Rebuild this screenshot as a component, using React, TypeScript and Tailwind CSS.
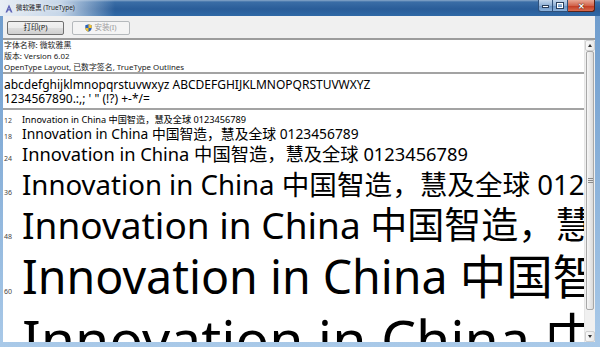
import React from "react";

const rows = [
  { label: "12", cls: "text-[9.2px] leading-[11px]" },
  { label: "18", cls: "text-[13.8px] leading-[17px]" },
  { label: "24", cls: "text-[18.3px] leading-[24px]" },
  { label: "36", cls: "text-[27.6px] leading-[36px]" },
  { label: "48", cls: "text-[37px] leading-[45px]" },
  { label: "60", cls: "text-[46.5px] leading-[58px]" },
  { label: "72", cls: "text-[55.5px] leading-[67px]" },
];

const sample = "Innovation in China 中国智造，慧及全球 0123456789";

function FontIcon() {
  return (
    <svg width="8" height="9" viewBox="0 0 8 9">
      <path d="M4 0.5 L7.5 8.5 H5.8 L5 6.5 H3 L2.2 8.5 H0.5 Z M3.4 5.2 H4.6 L4 3.4 Z" fill="#5a5fb4" />
    </svg>
  );
}

function Shield() {
  return (
    <svg width="7" height="8" viewBox="0 0 7 8">
      <path d="M3.5 0.3 L6.7 1.3 V4 C6.7 6 5 7.3 3.5 7.8 C2 7.3 0.3 6 0.3 4 V1.3 Z" fill="#2d62b8" />
      <path d="M3.5 0.3 L6.7 1.3 V4 H3.5 Z" fill="#f2c230" />
      <path d="M0.3 4 H3.5 V7.8 C2 7.3 0.3 6 0.3 4 Z" fill="#f2c230" />
    </svg>
  );
}

function TitleBar() {
  return (
    <div className="relative h-[16px] shrink-0 bg-[linear-gradient(to_right,rgba(232,238,245,1)_0px,rgba(206,220,236,0.95)_60px,rgba(60,110,170,0)_115px),linear-gradient(to_bottom,#8aa9cb_0px,#3a6da6_2px,#2a5d99_9px,#3069a6_16px)] flex items-center pl-[5px] gap-[3px]">
      <FontIcon />
      <span className="text-[6.4px] leading-none text-[#1b1b1b] [text-shadow:0_0_4px_#fff]">微软雅黑 (TrueType)</span>
      <div className="absolute right-[5px] top-0 flex">
        <div className="w-[15px] h-[12px] rounded-bl-[3px] border border-t-0 border-[#30517a] bg-[linear-gradient(to_bottom,#c5d7ec,#8fb0d6_50%,#6a92c2_51%,#8cb2dc)] flex items-end justify-center pb-[3px]">
          <div className="w-[5px] h-[1px] bg-white border border-[#2a3f5c] box-content" />
        </div>
        <div className="w-[15px] h-[12px] border-b border-r border-[#30517a] bg-[linear-gradient(to_bottom,#c5d7ec,#8fb0d6_50%,#6a92c2_51%,#8cb2dc)] flex items-center justify-center">
          <div className="w-[4px] h-[3px] border-[1.5px] border-white outline outline-1 outline-[#2a3f5c] box-content" />
        </div>
        <div className="w-[27px] h-[12px] rounded-br-[3px] border border-t-0 border-l-0 border-[#5a2218] bg-[linear-gradient(to_bottom,#e9a895,#d2654d_50%,#c0381f_51%,#d86b4f)] flex items-center justify-center">
          <span className="text-[8px] leading-none font-bold text-white [text-shadow:0_0_1px_#3a1208,0_0_1px_#3a1208]">✕</span>
        </div>
      </div>
    </div>
  );
}

function Toolbar() {
  return (
    <div className="h-[24px] shrink-0 bg-[#f0f0f0] border-b-2 border-[#9c9c9c] flex items-start pt-[5px] pl-[4px] gap-[8px]">
      <button className="w-[57px] h-[14px] rounded-[2px] border border-[#707070] bg-[linear-gradient(to_bottom,#f2f2f2,#ebebeb_50%,#dddddd_51%,#cfcfcf)] text-[7.5px] leading-none text-[#111] flex items-center justify-center">
        打印(P)
      </button>
      <button className="w-[58px] h-[14px] rounded-[2px] border border-[#b5b9bc] bg-[#f4f4f4] text-[7.5px] leading-none text-[#9a9a9a] flex items-center justify-center gap-[2px]">
        <Shield />
        安装(I)
      </button>
    </div>
  );
}

function Scrollbar() {
  return (
    <div className="w-[11px] shrink-0 flex flex-col bg-[#f0f0f0] border-l border-[#e6e6e6]">
      <div className="h-[11px] shrink-0 flex items-center justify-center bg-[linear-gradient(to_right,#f9f9f9,#e8e8e8)] border border-[#d0d0d0] rounded-[2px]">
        <div className="w-0 h-0 border-x-[2.5px] border-x-transparent border-b-[3px] border-b-[#333]" />
      </div>
      <div className="h-[259px] shrink-0 mx-px rounded-[2px] border border-[#a8a8a8] bg-[linear-gradient(to_right,#f7f7f7,#e6e6e6_60%,#dadada)] flex flex-col items-center justify-center gap-px">
        <div className="w-[5px] h-px bg-[#8a8a8a]" />
        <div className="w-[5px] h-px bg-[#8a8a8a]" />
        <div className="w-[5px] h-px bg-[#8a8a8a]" />
      </div>
      <div className="flex-1" />
      <div className="h-[11px] shrink-0 flex items-center justify-center bg-[linear-gradient(to_right,#f9f9f9,#e8e8e8)] border border-[#d0d0d0] rounded-[2px]">
        <div className="w-0 h-0 border-x-[2.5px] border-x-transparent border-t-[3px] border-t-[#333]" />
      </div>
    </div>
  );
}

export default function App() {
  return (
    <div className="w-[600px] h-[347px] flex flex-col overflow-hidden bg-[linear-gradient(to_bottom,#6d9bcc,#a9c9e8)] font-['Noto_Sans','Noto_Sans_CJK_SC',sans-serif]">
      <TitleBar />
      <div className="flex-1 min-h-0 flex flex-col pl-[3px] pr-[5px] pb-[5px]">
        <Toolbar />
        <div className="flex-1 min-h-0 flex bg-white">
          <div className="flex-1 min-w-0 overflow-hidden text-black">
            <div className="pl-px border-b-2 border-[#a3a3a3] h-[34px] text-[7.9px] leading-[11px] text-[#1a1a1a]">
              <div>字体名称: 微软雅黑</div>
              <div>版本: Version 6.02</div>
              <div>OpenType Layout, 已数字签名, TrueType Outlines</div>
            </div>
            <div className="pl-px pt-[4px] h-[36px] border-b-2 border-[#a3a3a3] text-[12px] leading-[13.5px] whitespace-nowrap">
              <div>abcdefghijklmnopqrstuvwxyz ABCDEFGHIJKLMNOPQRSTUVWXYZ</div>
              <div>1234567890.:,; ' " (!?) +-*/=</div>
            </div>
            <div className="pl-px pt-[4px]">
              {rows.map((r) => (
                <div key={r.label} className="flex items-baseline whitespace-nowrap">
                  <span className="w-[18px] shrink-0 text-[7px] leading-none text-[#444]">{r.label}</span>
                  <span className={r.cls}>{sample}</span>
                </div>
              ))}
            </div>
          </div>
          <Scrollbar />
        </div>
      </div>
    </div>
  );
}
